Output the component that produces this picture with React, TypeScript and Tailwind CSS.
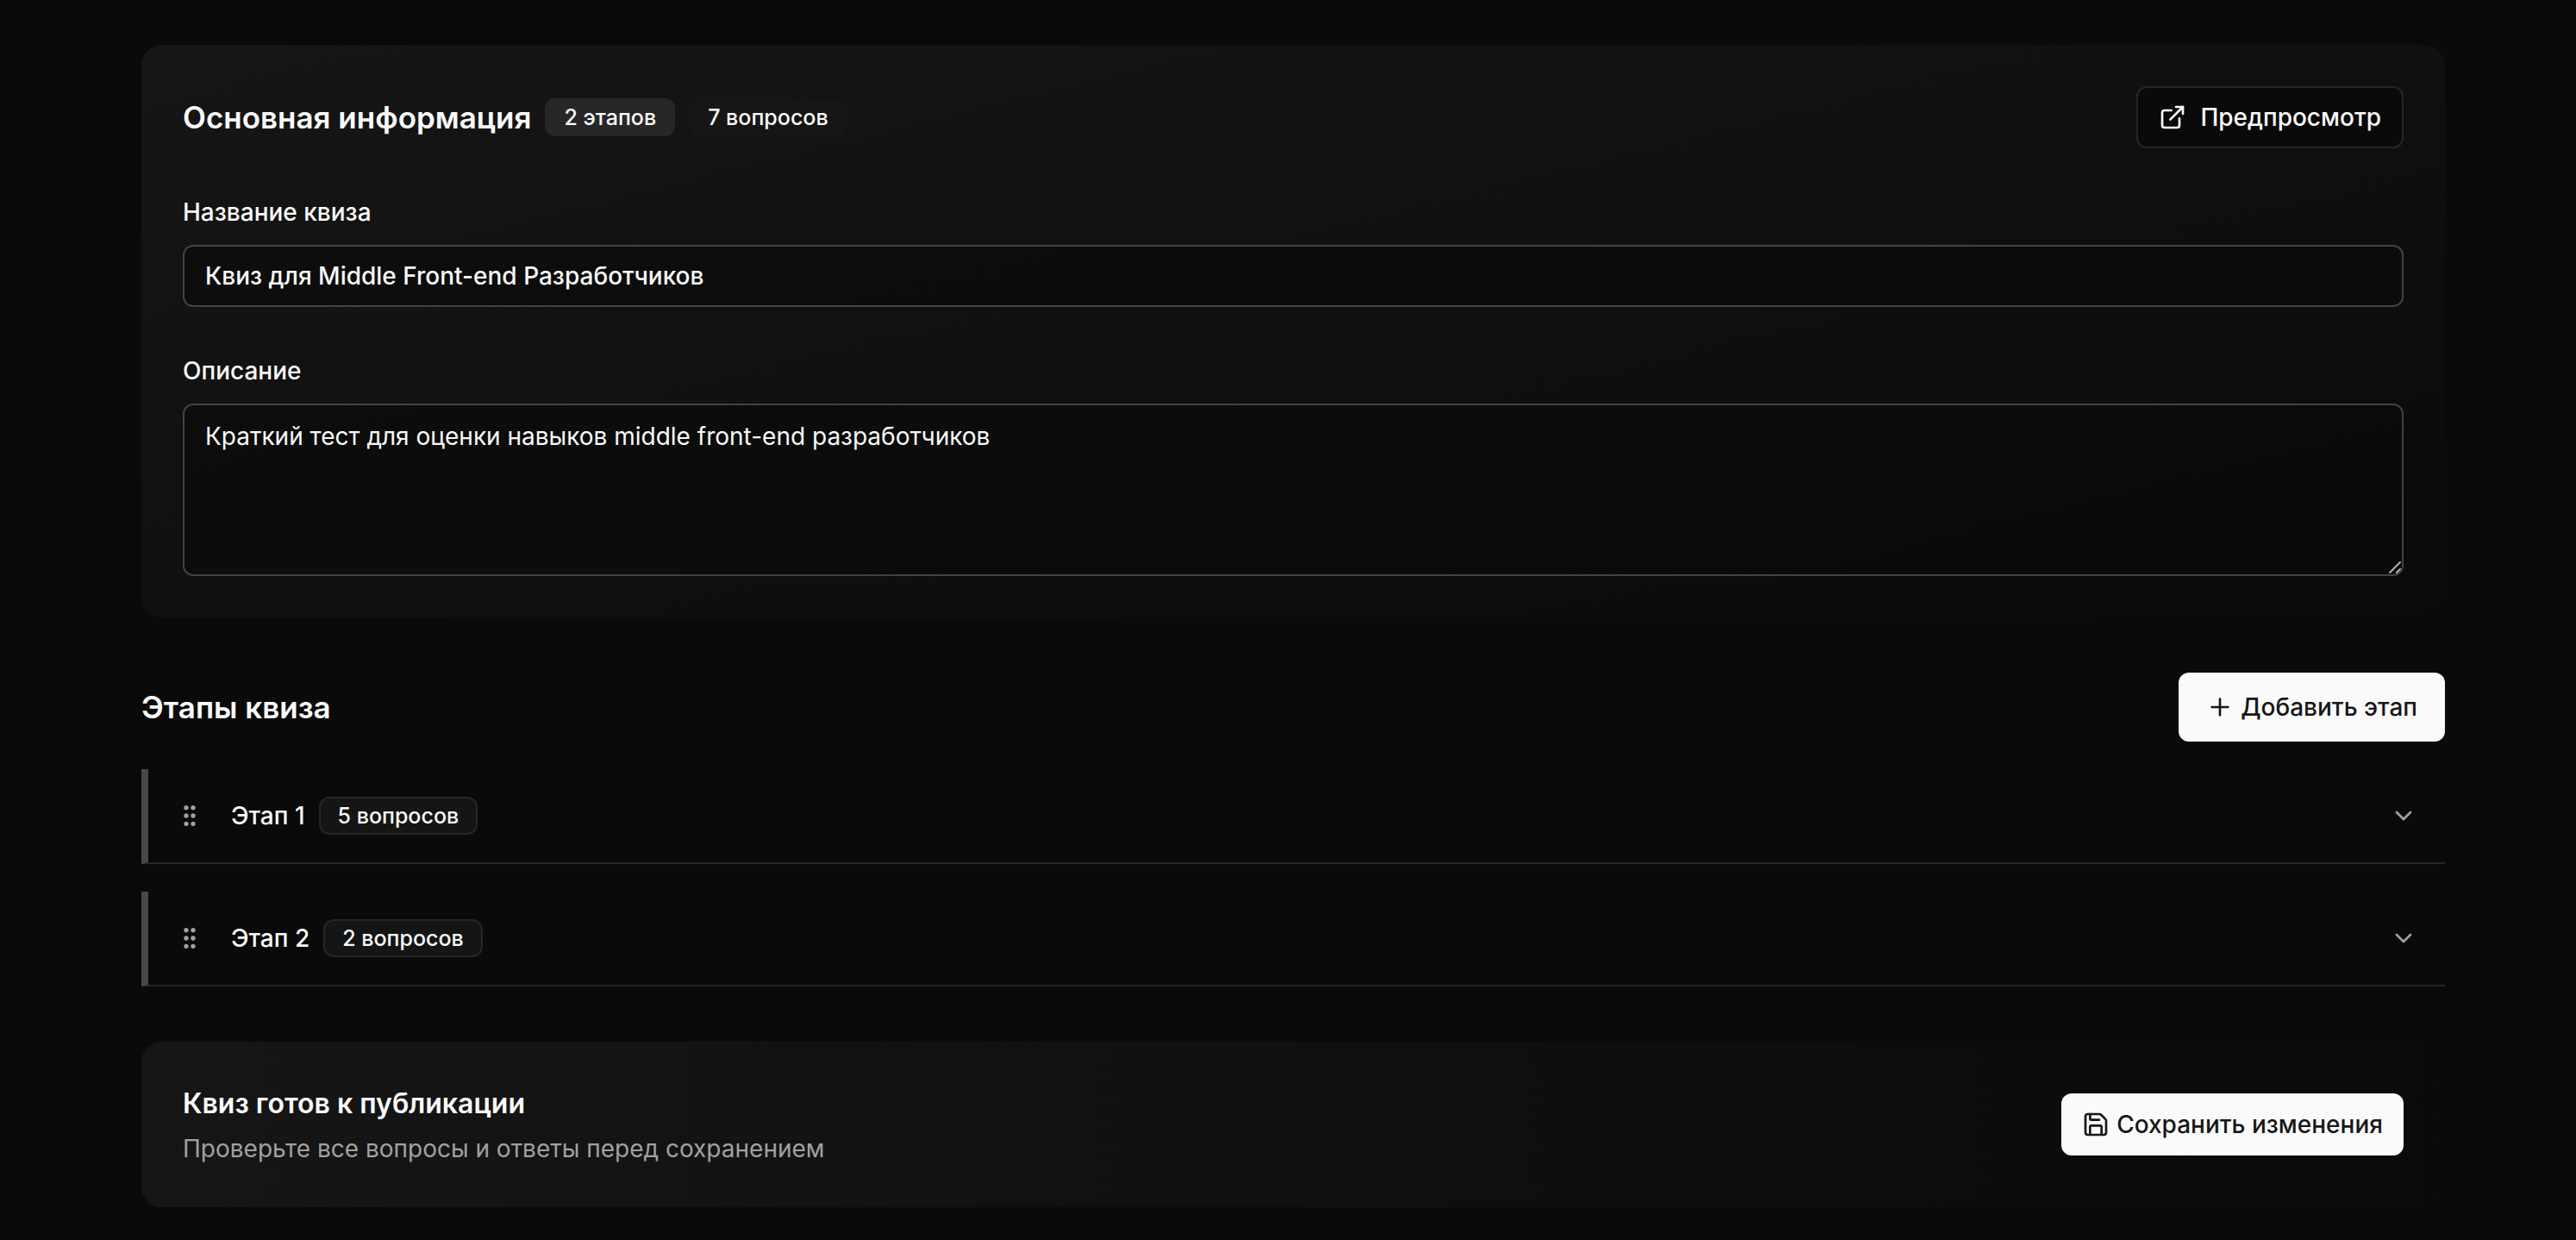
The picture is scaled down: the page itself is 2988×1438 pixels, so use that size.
import type { ReactNode } from "react";
import { ChevronDown, ExternalLink, GripVertical, Plus, Save } from "lucide-react";
import { clsx } from "clsx";

interface Stage {
  id: number;
  title: string;
  questions: string;
}

const stages: Stage[] = [
  { id: 1, title: "Этап 1", questions: "5 вопросов" },
  { id: 2, title: "Этап 2", questions: "2 вопросов" },
];

interface BadgeProps {
  children: ReactNode;
  className?: string;
}

function Badge({ children, className }: BadgeProps) {
  return (
    <span
      className={clsx(
        "inline-flex h-11 items-center rounded-xl border-2 px-5 text-[25px] leading-8 font-medium whitespace-nowrap",
        className,
      )}
    >
      {children}
    </span>
  );
}

function StageRow({ stage }: { stage: Stage }) {
  return (
    <li className="flex h-[110px] items-center border-b-2 border-l-8 border-b-[#262626] border-l-[#484848] pr-8 pl-8">
      <button type="button" aria-label="Переместить этап" className="cursor-grab text-[#a1a1a1]">
        <GripVertical className="size-8" />
      </button>
      <button type="button" aria-expanded={false} className="ml-8 flex flex-1 items-center gap-4 text-left">
        <span className="text-[28px] leading-10 font-medium">{stage.title}</span>
        <Badge className="border-[#262626] bg-[#151515]">{stage.questions}</Badge>
        <ChevronDown className="ml-auto size-8 text-[#a1a1a1]" />
      </button>
    </li>
  );
}

export default function App() {
  return (
    <main className="flex min-h-screen flex-col gap-16 bg-[#0a0a0a] pt-[52px] pr-[152px] pb-9 pl-[164px] font-['Inter','Liberation_Sans',sans-serif] text-[#fafafa]">
      <section className="rounded-3xl bg-linear-to-br from-[#161616] to-[#0a0a0a] p-12">
        <header className="flex items-center justify-between">
          <div className="flex items-center gap-4">
            <h2 className="text-[35px] leading-12 font-semibold">Основная информация</h2>
            <Badge className="border-transparent bg-[#272727]">2 этапов</Badge>
            <Badge className="border-transparent bg-[#161616]">7 вопросов</Badge>
          </div>
          <a
            href="#preview"
            className="flex h-18 items-center gap-4 rounded-xl border-2 border-[#262626] bg-[#0a0a0a] px-6 text-[28px] leading-10 font-medium"
          >
            <ExternalLink className="size-8" />
            Предпросмотр
          </a>
        </header>

        <div className="mt-14 flex flex-col gap-5">
          <label htmlFor="quiz-title" className="text-[28px] leading-9 font-medium">
            Название квиза
          </label>
          <input
            id="quiz-title"
            type="text"
            defaultValue="Квиз для Middle Front-end Разработчиков"
            className="h-18 w-full rounded-xl border-2 border-[#434343] bg-[#0a0a0a]/60 px-6 text-[28px] leading-10 font-medium outline-none"
          />
        </div>

        <div className="mt-14 flex flex-col gap-5">
          <label htmlFor="quiz-description" className="text-[28px] leading-9 font-medium">
            Описание
          </label>
          <div className="relative">
            <textarea
              id="quiz-description"
              defaultValue="Краткий тест для оценки навыков middle front-end разработчиков"
              className="block h-[200px] w-full resize-y rounded-xl border-2 border-[#434343] bg-[#0a0a0a]/60 px-6 py-4 text-[28px] leading-10 outline-none [&::-webkit-resizer]:bg-transparent"
            />
            <svg
              aria-hidden="true"
              viewBox="0 0 14 14"
              className="pointer-events-none absolute right-[3px] bottom-[3px] size-3.5"
              fill="none"
              stroke="#b0b0b0"
              strokeWidth="2"
              strokeLinecap="round"
            >
              <path d="M1 13 13 1M9 13l4-4" />
            </svg>
          </div>
        </div>
      </section>

      <section>
        <header className="flex items-center justify-between">
          <h2 className="text-[35px] leading-12 font-semibold">Этапы квиза</h2>
          <button
            type="button"
            className="flex h-20 items-center gap-2 rounded-xl bg-[#fafafa] px-8 text-[28px] leading-10 font-medium text-[#171717]"
          >
            <Plus className="size-8" />
            Добавить этап
          </button>
        </header>
        <ul className="mt-8 flex flex-col gap-8">
          {stages.map((stage) => (
            <StageRow key={stage.id} stage={stage} />
          ))}
        </ul>
      </section>

      <section className="flex items-center justify-between rounded-3xl bg-linear-to-r from-[#161616] to-[#0a0a0a] p-12">
        <div className="flex flex-col gap-2">
          <h3 className="text-[32px] leading-12 font-semibold">Квиз готов к публикации</h3>
          <p className="text-[28px] leading-10 text-[#a1a1a1]">Проверьте все вопросы и ответы перед сохранением</p>
        </div>
        <button
          type="button"
          className="flex h-18 items-center gap-2 rounded-xl bg-[#fafafa] px-6 text-[28px] leading-10 font-medium text-[#171717]"
        >
          <Save className="size-8" />
          Сохранить изменения
        </button>
      </section>
    </main>
  );
}
